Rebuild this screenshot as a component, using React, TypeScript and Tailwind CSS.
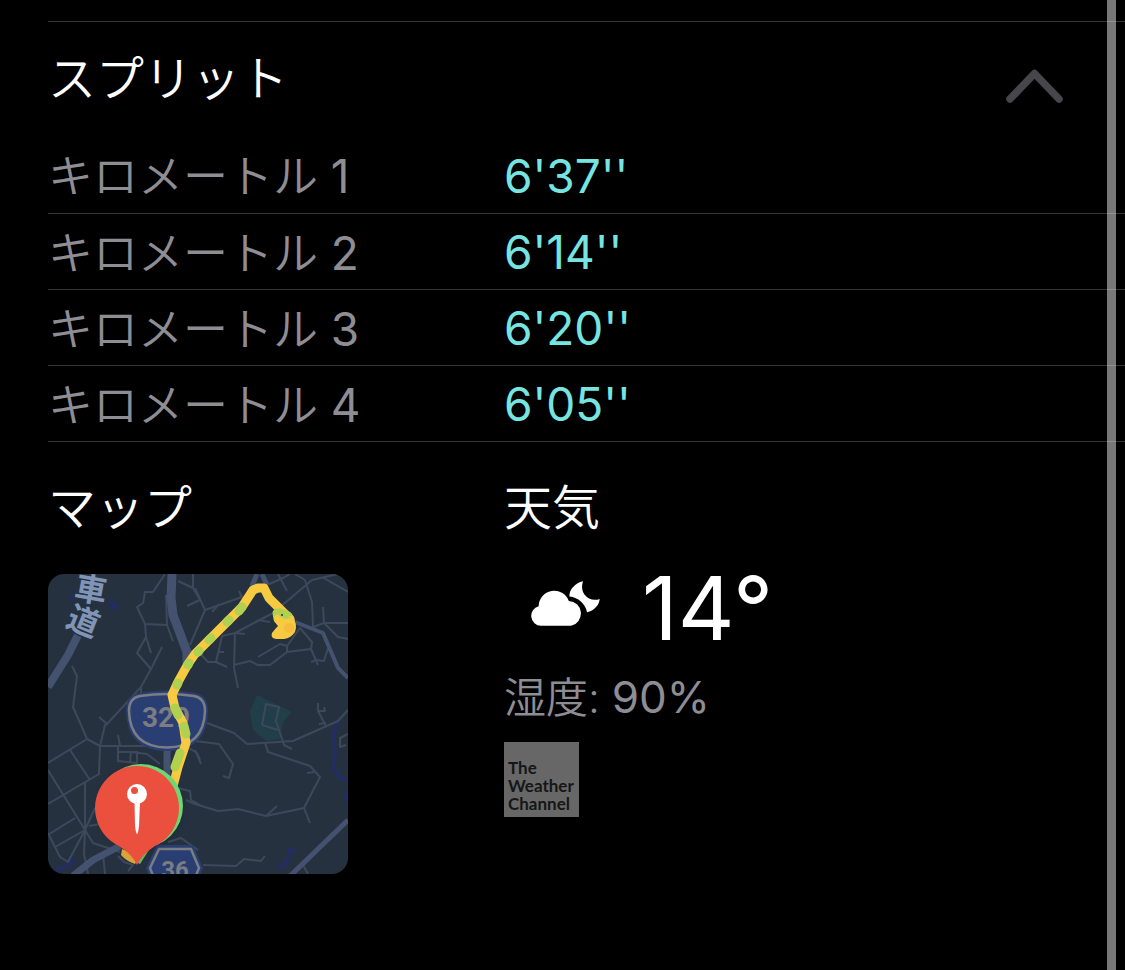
import { useState } from "react";

type Split = {
  km: number;
  pace: string;
};

const splits: Split[] = [
  { km: 1, pace: "6'37''" },
  { km: 2, pace: "6'14''" },
  { km: 3, pace: "6'20''" },
  { km: 4, pace: "6'05''" },
];

// small streets, drawn as plain polylines
const streets = [
  "117,0 105,18 97,18 95,29 89,33 97,50 119,51 125,67",
  "119,51 118,21",
  "97,50 98,63 103,79",
  "98,63 89,79 103,95",
  "114,73 103,95 93,113 59,150 51,143",
  "93,113 93,120",
  "24,92 29,102 25,133 33,151 39,165 0,189",
  "59,150 57,151 52,172 51,200 0,230",
  "130,7 145,14 145,0",
  "145,14 152,26 139,32",
  "157,36 142,71",
  "147,14 157,36 194,23 191,17",
  "164,38 171,30",
  "174,62 187,59 225,39 264,6 290,0",
  "187,59 186,94 190,114",
  "187,59 197,60",
  "174,62 168,88 179,93",
  "168,88 160,88 147,74",
  "170,78 176,78",
  "186,91 202,87 210,91 222,91 239,78 263,75",
  "210,83 232,70 239,72 239,78",
  "239,72 252,54 264,68 263,75 270,91",
  "263,88 268,86 276,87 280,74",
  "247,0 257,6 264,28 265,53 276,49 300,49",
  "275,33 276,49 290,63 300,65",
  "274,3 300,18",
  "239,17 230,0",
  "219,11 235,4 242,0",
  "210,46 222,48",
  "214,151 218,130 231,133 228,147 236,171 244,175",
  "214,151 230,156",
  "270,129 270,137 277,137 276,133",
  "270,137 278,152",
  "271,150 278,149",
  "159,149 186,159 199,170 245,167 290,147 300,136",
  "147,167 171,170 185,190 181,204 175,202",
  "147,176 153,190",
  "217,169 220,178 262,192 272,203 256,234 218,242 190,235 170,237 147,230 138,226",
  "229,232 218,242",
  "256,234 262,249",
  "259,199 266,198",
  "155,291 188,292 196,285 213,287 217,282",
  "255,291 260,300",
  "300,160 292,164 292,173 298,171",
  "39,165 52,172 100,172",
  "22,176 42,206",
  "0,196 37,256 45,269 72,278",
  "37,209 37,256",
  "37,256 7,273",
  "27,244 0,261",
  "0,259 12,283 20,288 37,256 47,234",
  "37,256 36,280 40,300",
  "41,252 52,250",
  "70,161 72,172",
  "70,172 70,187 89,189 89,178 69,178",
  "82,188 83,178 99,180 112,190",
  "130,214 142,217 143,226 152,231",
  "120,268 133,264 150,276",
  "139,173 149,179 152,186",
  "55,280 57,300",
  "70,282 76,288 85,291 80,297",
];

const highways = [
  { points: "32,57 20,81 0,113", width: 8 },
  { points: "124,0 123,24 125,41 139,78 139,90", width: 9 },
  { points: "119,170 119,215", width: 7 },
  { points: "25,302 45,286 72,272", width: 7 },
  { points: "241,303 300,246", width: 5 },
  { points: "209,0 204,12", width: 5 },
  { points: "214,0 219,11", width: 5 },
  { points: "247,48 275,59 290,94 300,104", width: 4 },
];

// stretches of the run where the pace was slower
const greenParts = [
  "141,89 140,91",
  "130,109 129,111",
  "127,134 130,141",
  "136,152 138,160",
  "132,179 127,193",
  "151,77 150,78",
  "163,64 161,66",
  "181,46 179,48",
  "194,33 191,37",
  "232,39 240,42",
];

const RouteMap = () => {
  return (
    <svg
      viewBox="0 0 300 300"
      className="block w-[300px] rounded-2xl bg-[#263140]"
      role="img"
      aria-labelledby="map-title"
    >
      <path
        d="M209 121L244 138L235 148L232 165L218 167L205 156L202 137Z"
        fill="#213f49"
      />
      <g fill="none" stroke="#232d62" strokeWidth="4" strokeLinejoin="round">
        <path d="M291 146L285 159L287 179L285 193L292 204L300 207" />
        <path d="M230 294L239 288L242 276L248 276M300 217L297 227" />
        <path d="M7 297L20 291L25 285L20 294" />
      </g>
      <path d="M59 23L72 33L64 37ZM27 15L20 27L25 26Z" fill="#232d62" />
      <g fill="none" stroke="#3d495a" strokeWidth="2" strokeLinejoin="round">
        {streets.map((points) => (
          <polyline key={points} points={points} />
        ))}
      </g>
      <g fill="none" stroke="#445270" strokeLinejoin="round">
        {highways.map((road) => (
          <polyline
            key={road.points}
            points={road.points}
            strokeWidth={road.width}
          />
        ))}
      </g>

      <g
        fill="#8095b5"
        stroke="#263140"
        strokeWidth="3"
        paintOrder="stroke"
        fontSize="32"
        fontWeight="700"
        fontFamily="'Noto Sans CJK JP', sans-serif"
        textAnchor="middle"
      >
        <text transform="translate(41 27) rotate(10)">車</text>
        <text transform="translate(31 58) rotate(22)">道</text>
      </g>

      <g fontFamily="Roboto, Arial, sans-serif" fontWeight="700" textAnchor="middle">
        <path
          d="M91 119Q119 114 147 119Q160 121 160 137Q159 177 119 177Q79 177 78 137Q78 121 91 119Z"
          fill="#293f74"
        />
        <path
          d="M92 122Q119 118 146 122Q157 124 157 137Q156 173 119 173.500Q82 173 81 137Q81 124 92 122Z"
          fill="none"
          stroke="#7b7d82"
          strokeWidth="2.500"
        />
        <text x="118" y="153" fontSize="28" fill="#7b7d82">
          329
        </text>
        <path d="M109 271H145L155 294L148 312H105L98 294Z" fill="#293f74" />
        <path
          d="M111 275H143L151 294L145 309H108L102 294Z"
          fill="none"
          stroke="#7b7d82"
          strokeWidth="2.500"
        />
        <text x="127" y="304" fontSize="24" fill="#7b7d82">
          36
        </text>
      </g>

      <g
        fill="none"
        strokeWidth="9"
        strokeLinecap="round"
        strokeLinejoin="round"
      >
        <path
          d="M125 212L130 193L138 169L135 149L127 134L124 121L130 108L140 90L147 80L162 65L180 47L194 33L205 16L210 14L216 14L221 24L232 35L242 45L243 53L239 59"
          stroke="#f6ca41"
        />
        <g stroke="#b0d04f">
          {greenParts.map((points) => (
            <polyline key={points} points={points} />
          ))}
        </g>
        <path d="M229 39L230 45" stroke="#b0d04f" />
      </g>
      <path
        d="M226 43Q229 38 234 43L244 42Q250 50 247 58Q243 64 236 65H228Q222 64 224 59Q227 55 230 52Q226 48 226 43Z"
        fill="#f6ca41"
      />
      <path d="M231 36L243 44L237 45L231 42Z" fill="#b0d04f" />
      <circle cx="241" cy="54" r="5" fill="#f5bd3b" />
      <circle cx="234" cy="41" r="1" fill="#263140" />

      <path d="M74 275L73 281Q78 287 87 290L92 282Z" fill="#d9a53b" />
      <path d="M82 276L88 288L92 290L101 276Z" fill="#66b75c" />
      <circle
        cx="93"
        cy="232"
        r="42"
        fill="#70d672"
        className="drop-shadow-md"
      />
      <path
        d="M89 291Q84 280 71 272A42 42 0 1 1 107 272Q94 280 89 291Z"
        fill="#eb4f3d"
      />
      <path
        d="M86.500 228L87 252Q88 260 89 260Q90 260 91 252L92 228Z"
        fill="#fff"
      />
      <circle cx="89" cy="220" r="10" fill="#fff" />
      <circle cx="86.500" cy="216.500" r="3.500" fill="#eb4f3d" />
    </svg>
  );
};

const CloudMoon = () => {
  return (
    <svg
      viewBox="0 0 208 136"
      className="mb-2 w-[69px]"
      fill="#fff"
      aria-hidden="true"
    >
      <path d="M30 135A30 30 0 0 1 23 76A47 47 0 0 1 114 60A38 38 0 0 1 121 135Z" />
      <path d="M157 1C134 6 114 26 116 47C142 50 164 68 169 94C190 90 206 72 207 54C193 60 172 57 161 41C152 27 153 12 157 1Z" />
    </svg>
  );
};

const App = () => {
  const [open, setOpen] = useState(true);

  return (
    <div className="min-h-screen bg-black pt-[21px] pl-12 font-[Inter,'Noto_Sans_CJK_JP',sans-serif] text-white">
      <section className="border-t border-[#333335]">
        <div className="flex items-end justify-between pt-[33px] pr-[62px] pb-[34px]">
          <h2 className="text-5xl leading-12 font-[350]">スプリット</h2>
          <button
            type="button"
            aria-label="スプリット"
            aria-expanded={open}
            onClick={() => setOpen(!open)}
            className="cursor-pointer"
          >
            <svg
              viewBox="0 0 57 34"
              className={open ? "block w-[57px]" : "block w-[57px] rotate-180"}
              fill="none"
              stroke="#47464b"
              strokeWidth="7.500"
              strokeLinecap="round"
              strokeLinejoin="round"
            >
              <path d="M4 30L28.500 4.500L53 30" />
            </svg>
          </button>
        </div>
        {open && (
          <table className="w-full table-fixed border-collapse">
            <tbody>
              {splits.map((split) => (
                <tr key={split.km} className="h-[76px] border-b border-[#333335]">
                  <th
                    scope="row"
                    className="w-[456px] p-0 pt-1 text-left text-[45px] leading-12 font-[350] text-[#8e8d93]"
                  >
                    キロメートル{" "}
                    <span className="text-[46px] font-normal">{split.km}</span>
                  </th>
                  <td className="p-0 pt-[2px] text-[46px] leading-12 text-[#76e5e1]">
                    {split.pace}
                  </td>
                </tr>
              ))}
            </tbody>
          </table>
        )}
      </section>

      <div className="grid grid-cols-[456px_1fr] pt-[42px] pb-24">
        <section>
          <h2 id="map-title" className="mb-[42px] text-5xl leading-12 font-[350]">
            マップ
          </h2>
          <RouteMap />
        </section>
        <section>
          <h2 className="mb-[42px] text-5xl leading-12 font-[350]">天気</h2>
          <div className="flex h-17 items-center gap-[42px] pl-[27px]">
            <CloudMoon />
            <p className="text-[88px] leading-17">14°</p>
          </div>
          <p className="mt-[31px] text-[42px] leading-12 font-[350] text-[#8e8d93]">
            湿度: <span className="text-[44px] font-normal">90%</span>
          </p>
          <p className="mt-5 flex size-[75px] items-end bg-[#676767] pb-1 pl-1 font-[Lato,sans-serif] text-[17px] leading-[18px] font-bold text-[#161616]">
            The Weather Channel
          </p>
        </section>
      </div>

      {/* scroll track, the row lines show through it */}
      <div className="fixed inset-y-0 right-[9px] w-[9px] bg-white/47" />
    </div>
  );
};

export default App;
